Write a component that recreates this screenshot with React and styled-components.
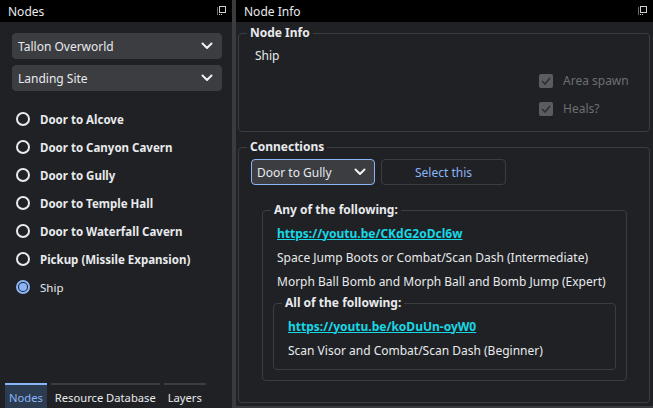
import React from "react";
import styled, { createGlobalStyle } from "styled-components";

const GlobalStyle = createGlobalStyle`
  html, body {
    margin: 0;
    padding: 0;
    background: #202124;
  }
  body {
    font-family: "Noto Sans", "DejaVu Sans", sans-serif;
    font-size: 11px;
    color: #e8eaed;
  }
`;

const Window = styled.div`
  display: flex;
  width: 653px;
  height: 408px;
  background: #202124;
  overflow: hidden;
`;

const Dock = styled.div`
  display: flex;
  flex-direction: column;
  width: ${(p) => (p.$width ? `${p.$width}px` : "auto")};
  flex: ${(p) => (p.$width ? "none" : "1")};
  min-width: 0;
`;

const Splitter = styled.div`
  width: 4px;
  background: #3a3b3e;
  flex: none;
`;

const TitleBar = styled.div`
  height: 22px;
  background: #000;
  display: flex;
  align-items: center;
  justify-content: space-between;
  padding: 0 6px 0 8px;
  font-size: 12px;
  color: #e8eaed;
  flex: none;
`;

const FloatIcon = () => (
  <svg width="10" height="10" viewBox="0 0 10 10">
    <rect x="3.5" y="0.5" width="6" height="6" fill="none" stroke="#d0d0d0" strokeWidth="1" />
    <path d="M1 2h1M1 4h1M1 6h1M1 8h1M3 8.5h1M5 8.5h1" stroke="#d0d0d0" strokeWidth="1" />
  </svg>
);

const LeftBody = styled.div`
  flex: 1;
  display: flex;
  flex-direction: column;
  padding: 11px 10px 0 12px;
`;

const Combo = styled.div`
  display: flex;
  align-items: center;
  justify-content: space-between;
  height: 26px;
  width: ${(p) => (p.$w ? `${p.$w}px` : "auto")};
  box-sizing: border-box;
  padding: 0 8px 0 5px;
  background: #3c3d41;
  border: 1px solid ${(p) => (p.$focus ? "#8ab4f8" : "#3c3d41")};
  border-radius: 4px;
  font-size: 12px;
  color: #e8eaed;
  margin-bottom: ${(p) => p.$mb || 0}px;
`;

const Chevron = () => (
  <svg width="12" height="8" viewBox="0 0 12 8">
    <path d="M1.5 1.5L6 6l4.5-4.5" fill="none" stroke="#f0f0f0" strokeWidth="2" strokeLinecap="round" strokeLinejoin="round" />
  </svg>
);

const NodeList = styled.div`
  display: flex;
  flex-direction: column;
  margin-top: 14px;
  padding-left: 4px;
`;

const NodeRow = styled.div`
  display: flex;
  align-items: center;
  height: 28px;
  gap: 10px;
  font-weight: ${(p) => (p.$checked ? 400 : 700)};
  font-size: 11.5px;
`;

const Radio = styled.span`
  width: 14px;
  height: 14px;
  box-sizing: border-box;
  border-radius: 50%;
  border: 2px solid ${(p) => (p.$checked ? "#8ab4f8" : "#e8eaed")};
  display: flex;
  align-items: center;
  justify-content: center;
  &::after {
    content: "";
    width: 8px;
    height: 8px;
    border-radius: 50%;
    background: ${(p) => (p.$checked ? "#8ab4f8" : "transparent")};
  }
`;

const TabBar = styled.div`
  display: flex;
  gap: 4px;
  padding-left: 5px;
  height: 25px;
  flex: none;
`;

const Tab = styled.div`
  display: flex;
  align-items: center;
  padding: 2px 4px 0;
  border-top: 2px solid ${(p) => (p.$active ? "#8ab4f8" : "#3c3d41")};
  background: ${(p) => (p.$active ? "#2c3c50" : "transparent")};
  color: ${(p) => (p.$active ? "#8ab4f8" : "#e8eaed")};
  font-size: 11.2px;
`;

const RightBody = styled.div`
  flex: 1;
  display: flex;
  flex-direction: column;
  gap: 8px;
  padding: 4px 3px 3px 2px;
  border-bottom: 2px solid #3a3b3e;
`;

const Group = styled.fieldset`
  margin: 0;
  padding: 0;
  border: 1px solid #3c3d41;
  border-radius: 4px;
  min-width: 0;
  flex: ${(p) => (p.$grow ? 1 : "none")};
`;

const Legend = styled.legend`
  margin-left: 8px;
  padding: 0 3px;
  font-weight: 700;
  font-size: 12px;
  line-height: 14px;
`;

const NodeInfoContent = styled.div`
  display: flex;
  flex-direction: column;
  padding: 8px 16px 14px 16px;
`;

const Label = styled.div`
  font-size: 12px;
  line-height: 16px;
  color: ${(p) => (p.$dim ? "#6c6f74" : "#e8eaed")};
`;

const Checks = styled.div`
  display: flex;
  flex-direction: column;
  align-self: flex-end;
  gap: 12px;
  margin-top: 9px;
  width: 94px;
`;

const CheckRow = styled.div`
  display: flex;
  align-items: center;
  gap: 10px;
`;

const CheckBox = styled.span`
  width: 14px;
  height: 14px;
  border-radius: 2px;
  background: #5a5c60;
  display: flex;
  align-items: center;
  justify-content: center;
`;

const CheckMark = () => (
  <svg width="10" height="8" viewBox="0 0 10 8">
    <path d="M1 4l3 3 5-6" fill="none" stroke="#2e2f32" strokeWidth="1.6" />
  </svg>
);

const ConnContent = styled.div`
  display: flex;
  flex-direction: column;
  padding: 5px 22px 0 12px;
`;

const ControlsRow = styled.div`
  display: flex;
  gap: 6px;
  margin-bottom: 18px;
`;

const Button = styled.div`
  width: 125px;
  height: 26px;
  box-sizing: border-box;
  border: 1px solid #3c3d41;
  border-radius: 4px;
  display: flex;
  align-items: center;
  justify-content: center;
  color: #8ab4f8;
  font-size: 12px;
`;

const AnyGroup = styled(Group)`
  margin-left: 11px;
`;

const Requirements = styled.div`
  display: flex;
  flex-direction: column;
  padding: 4px 10px ${(p) => p.$pb ?? 10}px 10px;
`;

const ReqLine = styled.div`
  height: 24px;
  display: flex;
  align-items: center;
  padding-left: 4px;
  font-size: 12px;
`;

const Link = styled.a`
  color: #17d8e6;
  font-weight: 700;
  text-decoration: underline;
  font-size: 12px;
`;

const InnerGroup = styled(Group)`
  margin-top: 3px;
`;

const nodes = [
  "Door to Alcove",
  "Door to Canyon Cavern",
  "Door to Gully",
  "Door to Temple Hall",
  "Door to Waterfall Cavern",
  "Pickup (Missile Expansion)",
  "Ship",
];

export default function App() {
  return (
    <>
      <GlobalStyle />
      <Window>
        <Dock $width={232}>
          <TitleBar>
            <span>Nodes</span>
            <FloatIcon />
          </TitleBar>
          <LeftBody>
            <Combo $mb={6}>
              <span>Tallon Overworld</span>
              <Chevron />
            </Combo>
            <Combo>
              <span>Landing Site</span>
              <Chevron />
            </Combo>
            <NodeList>
              {nodes.map((n) => (
                <NodeRow key={n} $checked={n === "Ship"}>
                  <Radio $checked={n === "Ship"} />
                  <span>{n}</span>
                </NodeRow>
              ))}
            </NodeList>
          </LeftBody>
          <TabBar>
            <Tab $active>Nodes</Tab>
            <Tab>Resource Database</Tab>
            <Tab>Layers</Tab>
          </TabBar>
        </Dock>
        <Splitter />
        <Dock>
          <TitleBar>
            <span>Node Info</span>
            <FloatIcon />
          </TitleBar>
          <RightBody>
            <Group>
              <Legend>Node Info</Legend>
              <NodeInfoContent>
                <Label>Ship</Label>
                <Checks>
                  <CheckRow>
                    <CheckBox>
                      <CheckMark />
                    </CheckBox>
                    <Label $dim>Area spawn</Label>
                  </CheckRow>
                  <CheckRow>
                    <CheckBox>
                      <CheckMark />
                    </CheckBox>
                    <Label $dim>Heals?</Label>
                  </CheckRow>
                </Checks>
              </NodeInfoContent>
            </Group>
            <Group $grow>
              <Legend>Connections</Legend>
              <ConnContent>
                <ControlsRow>
                  <Combo $w={124} $focus>
                    <span>Door to Gully</span>
                    <Chevron />
                  </Combo>
                  <Button>Select this</Button>
                </ControlsRow>
                <AnyGroup>
                  <Legend>Any of the following:</Legend>
                  <Requirements>
                    <ReqLine>
                      <Link href="#">https://youtu.be/CKdG2oDcl6w</Link>
                    </ReqLine>
                    <ReqLine>Space Jump Boots or Combat/Scan Dash (Intermediate)</ReqLine>
                    <ReqLine>Morph Ball Bomb and Morph Ball and Bomb Jump (Expert)</ReqLine>
                    <InnerGroup>
                      <Legend>All of the following:</Legend>
                      <Requirements $pb={7}>
                        <ReqLine>
                          <Link href="#">https://youtu.be/koDuUn-oyW0</Link>
                        </ReqLine>
                        <ReqLine>Scan Visor and Combat/Scan Dash (Beginner)</ReqLine>
                      </Requirements>
                    </InnerGroup>
                  </Requirements>
                </AnyGroup>
              </ConnContent>
            </Group>
          </RightBody>
        </Dock>
      </Window>
    </>
  );
}
